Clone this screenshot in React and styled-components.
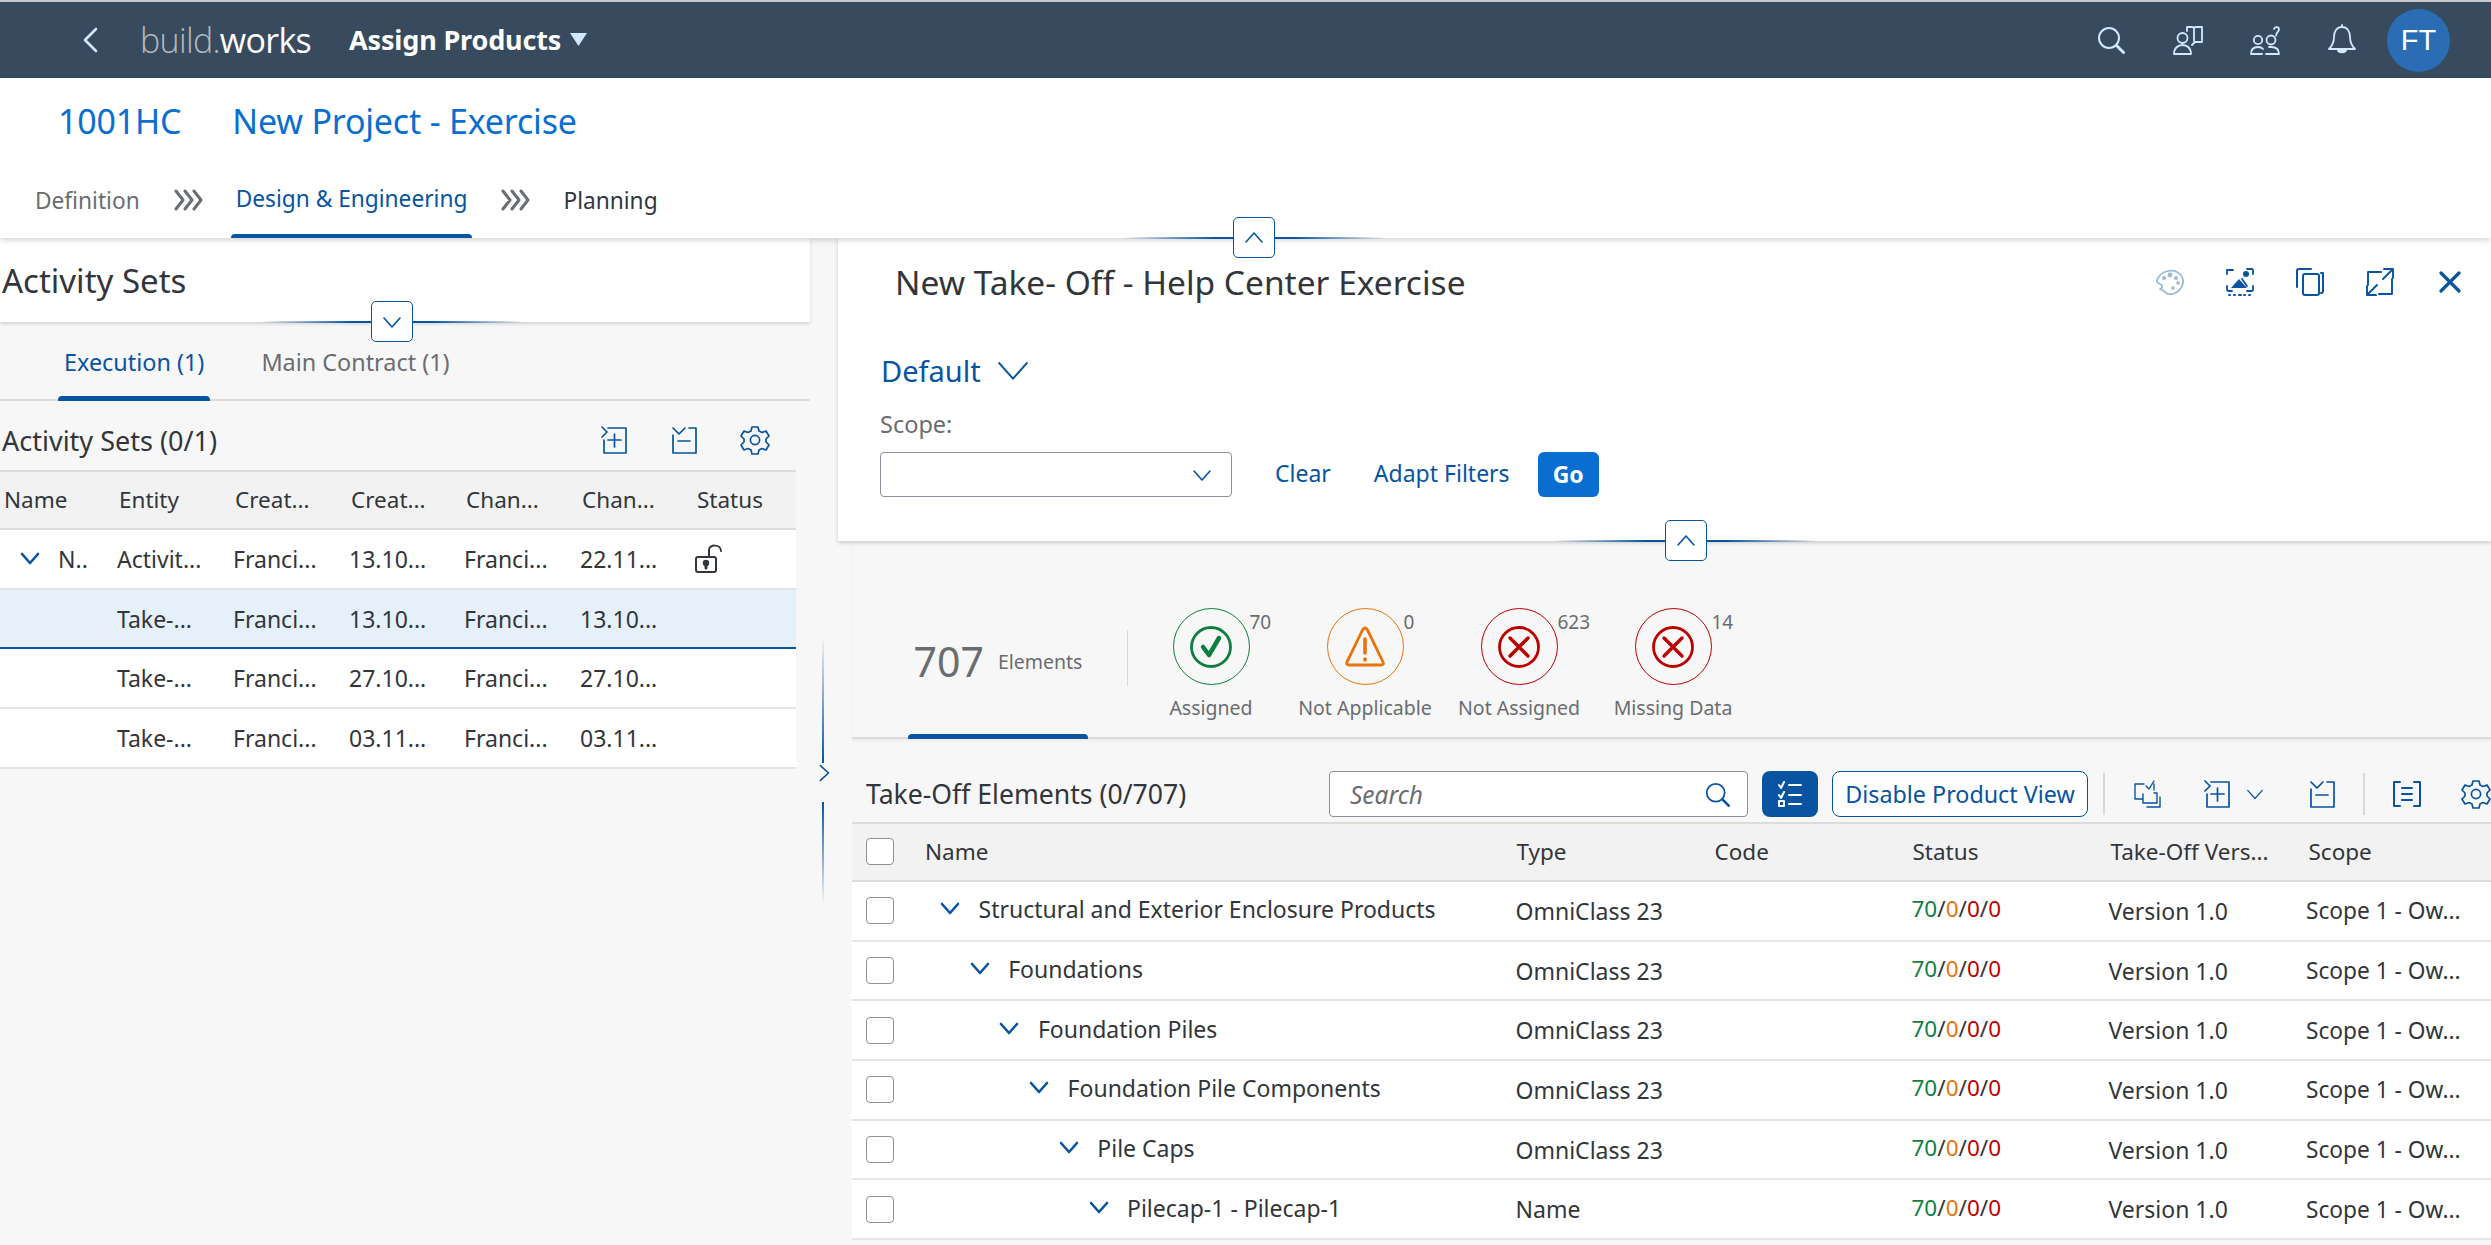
import React from 'react';
import styled, { createGlobalStyle, css } from 'styled-components';

const BLUE = '#0854a0';
const INK = '#32363a';
const GREY = '#6a6d70';
const LINE = '#e5e5e5';
const FONT = '"Noto Sans", "Open Sans", sans-serif';

const Global = createGlobalStyle`
  html, body { margin: 0; padding: 0; background: #f7f7f7; }
  * { box-sizing: border-box; }
  #root { width: 2491px; height: 1245px; overflow: hidden; font-family: ${FONT}; color: ${INK}; }
`;

const activeBar = css`
  position: relative;
  &::after {
    content: '';
    position: absolute;
    left: 0;
    right: 0;
    bottom: 0;
    height: ${p => p.$bar || 5}px;
    background: ${BLUE};
    border-radius: 4px 4px 0 0;
  }
`;

const Page = styled.div`display:flex;flex-direction:column;width:2491px;height:1245px;overflow:hidden;background:#f7f7f7;`;
const Shell = styled.header`height:78px;flex:none;background:#374a5e;border-top:2px solid #c9c9c9;display:flex;align-items:center;color:#fff;padding-right:34px;`;
const BackBtn = styled.div`width:140px;padding-left:82px;display:flex;color:#d1e8ff;`;
const Brand = styled.div`font-family:"Open Sans",sans-serif;font-weight:400;font-size:34px;letter-spacing:-0.7px;width:209px;color:#fff;`;
const BrandDim = styled.span`color:#b5b9bd;font-weight:300;`;
const AppTitle = styled.div`font-weight:700;font-size:27px;letter-spacing:-0.15px;display:flex;align-items:center;gap:9px;padding-bottom:2px;`;
const ShellSpacer = styled.div`flex:1;`;
const ShellIcon = styled.div`width:77px;display:flex;justify-content:center;color:#d1e8ff;`;
const Avatar = styled.div`width:63px;height:63px;margin:0 7px;border-radius:50%;background:#2a6db4;display:flex;align-items:center;justify-content:center;font-family:"Liberation Sans",sans-serif;font-size:29px;color:#fff;`;

const Header = styled.section`height:160px;flex:none;background:#fff;display:flex;flex-direction:column;position:relative;z-index:3;box-shadow:0 2px 6px rgba(0,0,0,.18);`;
const Crumbs = styled.div`display:flex;padding:20px 0 0 58px;height:92px;gap:51px;font-size:34px;color:#0a6ed1;letter-spacing:-0.2px;`;
const Steps = styled.nav`display:flex;align-items:stretch;height:68px;padding-left:35px;font-size:22.7px;`;
const Step = styled.div`display:flex;align-items:center;height:100%;padding-bottom:8px;color:${p => p.$tone};${p => p.$active && css`
  margin: 0 -5px;
  padding: 0 5px 12px;
  ${activeBar}
`}`;
const StepArrow = styled.div`display:flex;align-items:center;padding-bottom:8px;margin:0 33px;color:#6a6d70;`;

const Body = styled.main`flex:1;display:flex;min-height:0;`;
const Left = styled.section`width:810px;flex:none;display:flex;flex-direction:column;`;
const LeftHead = styled.div`height:84px;flex:none;background:#fff;position:relative;padding:22px 0 0 2px;font-size:33px;line-height:42px;box-shadow:0 2px 3px rgba(0,0,0,.15);z-index:1;`;
const Tabs = styled.div`height:79px;flex:none;display:flex;border-bottom:2px solid #dcdcdc;padding-left:58px;gap:45px;font-size:23.4px;`;
const Tab = styled.div`display:flex;align-items:center;padding:0 6px;height:79px;color:${p => p.$active ? BLUE : GREY};${p => p.$active && activeBar}`;
const TableBar = styled.div`height:69px;flex:none;display:flex;align-items:center;width:796px;padding:9px 26px 0 2px;font-size:27px;`;
const BarTitle = styled.div`flex:1;`;
const BarIcons = styled.div`display:flex;gap:42px;align-items:center;color:${BLUE};`;

const Grid = styled.div`display:grid;grid-template-columns:${p => p.$cols};width:${p => p.$width}px;margin-left:${p => p.$offset || 0}px;`;
const HeadCell = styled.div`height:60px;background:#f2f2f2;border-top:2px solid #dcdcdc;border-bottom:2px solid #dcdcdc;display:flex;align-items:center;padding:0 0 2px ${p => p.$pad || 4}px;font-size:22.5px;color:${INK};white-space:nowrap;overflow:hidden;`;
const Cell = styled.div`height:59.7px;background:${p => p.$selected ? '#e5f0fa' : '#fff'};border-bottom:${p => p.$selected ? `2px solid ${BLUE}` : `2px solid ${LINE}`};display:flex;align-items:center;padding:0 0 ${p => p.$lift || 0}px ${p => p.$pad || 2}px;font-size:${p => p.$size || 23}px;color:${INK};white-space:nowrap;overflow:hidden;`;
const TreeChevron = styled.span`display:inline-flex;color:${BLUE};margin-left:${p => p.$left}px;margin-right:${p => p.$right}px;`;

const Splitter = styled.div`width:28px;flex:none;display:flex;flex-direction:column;align-items:center;padding:398px 2px 0 0;color:${BLUE};`;
const SplitLine = styled.div`width:2px;height:${p => p.$h}px;background:linear-gradient(${p => p.$dir}, rgba(8,84,160,0), ${BLUE});`;
const SplitArrow = styled.div`height:39px;display:flex;align-items:flex-start;justify-content:center;margin-left:2px;`;

const Right = styled.section`flex:1;min-width:0;display:flex;flex-direction:column;`;
const FilterPanel = styled.div`height:303px;flex:none;background:#fff;position:relative;box-shadow:0 2px 4px rgba(0,0,0,.18);display:flex;flex-direction:column;z-index:2;`;
const PanelTop = styled.div`height:88px;flex:none;display:flex;align-items:center;padding:0 6px 0 57px;font-size:33.5px;`;
const PanelTitle = styled.div`flex:1;`;
const PanelIcons = styled.div`display:flex;align-items:center;color:${BLUE};`;
const PanelIcon = styled.div`width:70px;display:flex;justify-content:center;opacity:${p => p.$dim ? .4 : 1};`;
const Variant = styled.div`display:flex;align-items:center;gap:13px;padding-left:43px;height:72px;margin-top:8px;font-size:29px;color:${BLUE};`;
const ScopeLabel = styled.div`padding-left:42px;height:26px;line-height:26px;font-size:23.5px;color:${GREY};margin-top:5px;`;
const FilterRow = styled.div`display:flex;align-items:center;padding-left:42px;margin-top:15px;font-size:23px;color:${BLUE};`;
const Select = styled.div`width:352px;height:45px;background:#fff;border:1.5px solid #89919a;border-radius:4px;display:flex;align-items:center;justify-content:flex-end;padding-right:18px;color:${BLUE};margin-right:43px;`;
const LinkText = styled.div`margin-right:${p => p.$gap}px;padding-bottom:3px;`;
const GoBtn = styled.div`width:61px;height:45px;background:#0a6ed1;color:#fff;font-weight:700;border-radius:6px;display:flex;align-items:center;justify-content:center;padding-bottom:2px;`;

const Handle = styled.div`position:absolute;left:${p => p.$x}px;top:${p => p.$y}px;width:264px;height:2px;background:linear-gradient(90deg, rgba(8,84,160,0), ${BLUE} 35%, ${BLUE} 65%, rgba(8,84,160,0));z-index:5;`;
const HandleBtn = styled.div`position:absolute;left:111px;top:-20px;width:42px;height:41px;border:1.5px solid ${BLUE};border-radius:5px;background:#fff;color:${BLUE};display:flex;align-items:center;justify-content:center;`;

const KpiStrip = styled.div`height:198px;flex:none;margin-left:14px;border-bottom:2px solid #dcdcdc;box-shadow:0 2px 3px rgba(0,0,0,.05);display:flex;`;
const KpiTotal = styled.div`width:180px;margin-left:56px;height:198px;display:flex;align-items:center;justify-content:center;gap:14px;padding:47px 0 5px;color:${GREY};${activeBar}`;
const KpiNumber = styled.div`font-size:41px;line-height:44px;`;
const KpiWord = styled.div`font-size:19.5px;`;
const KpiDivider = styled.div`width:1px;height:56px;background:#d9d9d9;margin:89px 6px 0 39px;`;
const KpiItem = styled.div`width:154px;display:flex;flex-direction:column;align-items:center;padding-top:67px;`;
const KpiRing = styled.div`width:77px;height:77px;border-radius:50%;border:1.5px solid ${p => p.$tone};color:${p => p.$tone};position:relative;display:flex;align-items:center;justify-content:center;`;
const KpiCount = styled.div`position:absolute;left:76px;top:1px;font-size:19px;line-height:24px;color:${GREY};`;
const KpiLabel = styled.div`margin-top:10px;font-size:19.5px;line-height:26px;color:${GREY};white-space:nowrap;`;

const Toolbar = styled.div`height:83px;flex:none;display:flex;align-items:center;padding:27px 0 0 28px;color:${BLUE};white-space:nowrap;`;
const ToolTitle = styled.div`width:463px;font-size:26.6px;color:${INK};`;
const SearchBox = styled.div`width:419px;height:46px;flex:none;background:#fff;border:1.5px solid #89919a;border-radius:4px;display:flex;align-items:center;justify-content:space-between;padding:0 17px 0 20px;font-size:24.5px;font-style:italic;color:${GREY};`;
const SearchGlass = styled.span`color:${BLUE};display:flex;`;
const ToggleBtn = styled.div`width:56px;height:46px;flex:none;margin-left:14px;background:${BLUE};color:#fff;border-radius:8px;display:flex;align-items:center;justify-content:center;`;
const OutlineBtn = styled.div`width:256px;height:46px;flex:none;margin-left:14px;background:#fff;border:1.5px solid ${BLUE};border-radius:8px;display:flex;align-items:center;justify-content:center;font-size:23.3px;color:${BLUE};`;
const ToolSep = styled.div`width:2px;height:42px;flex:none;background:#d9d9d9;margin-left:${p => p.$l}px;`;
const ToolIcon = styled.div`display:flex;flex:none;margin-left:${p => p.$l}px;`;

const Check = styled.div`width:28px;height:27px;background:#fff;border:1.5px solid #89919a;border-radius:4px;margin-left:14px;`;
const Tone = styled.span`color:${p => p.$c};`;

const Svg = ({ w = 28, h = 28, box, children, stroke = 2 }) => (
  <svg width={w} height={h} viewBox={box || `0 0 ${w} ${h}`} fill="none" stroke="currentColor" strokeWidth={stroke} strokeLinecap="round" strokeLinejoin="round">{children}</svg>
);

const Chevron = ({ dir = 'down', size = 22, stroke = 1.6 }) => {
  const d = { down: 'M3 7l8 9 8-9', up: 'M3 15l8-9 8 9', right: 'M7 3l9 8-9 8', left: 'M15 3l-9 8 9 8' }[dir];
  return <Svg w={size} h={size} box="0 0 22 22" stroke={stroke}><path d={d} /></Svg>;
};
const BackChevron = () => <Svg w={16} h={26} stroke={2.6}><path d="M14 2L3 13l11 11" /></Svg>;
const TreeArrow = () => <Svg w={20} h={14} box="0 0 20 14" stroke={2.6}><path d="M2 2l8 9 8-9" /></Svg>;
const TripleArrow = () => (
  <Svg w={30} h={22} stroke={3}><path d="M3 2l7 9-7 9M12 2l7 9-7 9M21 2l7 9-7 9" /></Svg>
);
const Caret = () => <svg width="17" height="13" viewBox="0 0 17 13"><path d="M0 0h17L8.500 13z" fill="#d1e8ff" /></svg>;

const SearchIcon = ({ size = 28 }) => (
  <Svg w={size} h={size} box="0 0 28 28" stroke={2}><circle cx="12" cy="12" r="10" /><path d="M19.500 19.500l7 7" strokeWidth="3" /></Svg>
);
const HelpBook = () => (
  <Svg w={30} h={30} stroke={1.8}>
    <circle cx="9.500" cy="13" r="5" />
    <path d="M1 29c0-6 4-9 8.500-9s8.500 3 8.500 9z" />
    <path d="M14 6V2h5c1 0 2 1 2 1s1-1 2-1h6v15h-7l-3 3M21 3v13" />
  </Svg>
);
const PeopleAsk = () => (
  <Svg w={30} h={30} stroke={1.8}>
    <circle cx="8" cy="15" r="4.200" /><circle cx="21" cy="15" r="4.500" />
    <path d="M1 29c0-5 3-7 7-7 2.500 0 4 .7 5 2M1 29h11M16 29h13c0-5-3-7-8-7h-2" />
    <path d="M24 4c1-2.500 5-2.500 5 .5 0 2-3 3-3 6" />
  </Svg>
);
const BellIcon = () => (
  <Svg w={28} h={32} stroke={1.8}>
    <path d="M14 3c-5 0-8 4-8 10 0 6-2 9-5 12h26c-3-3-5-6-5-12 0-6-3-10-8-10zM14 3V1" />
    <path d="M10 26c0 3 8 3 8 0z" fill="currentColor" />
  </Svg>
);
const AddDoc = () => (
  <Svg w={28} h={28} stroke={1.7}>
    <path d="M8 2h18v25H4V14M2 1l5 5-5 5M8 14h13M14.500 8v13" />
  </Svg>
);
const RemoveDoc = () => (
  <Svg w={28} h={28} stroke={1.7}>
    <path d="M3 9v18h23V2h-7M3 2l6 6 6-6M8 15h12" />
  </Svg>
);
const GearIcon = ({ size = 30 }) => (
  <Svg w={size} h={size} box="0 0 30 30" stroke={1.7}>
    <path d="M12 2h6l1 4 3 1.500 4-1.500 3 5-3 3v3l3 3-3 5-4-1.500-3 1.500-1 4h-6l-1-4-3-1.500-4 1.500-3-5 3-3v-3l-3-3 3-5 4 1.500 3-1.500z" />
    <circle cx="15" cy="15" r="4.600" />
  </Svg>
);
const Palette = () => (
  <Svg w={30} h={28} stroke={1.8}>
    <path d="M5 21c3-1 3-4 0-5-3-1-4-3-2-6 4-7 13-9 19-6 6 3 8 10 4 16-3 5-9 7-13 6-3-1-4-4-8-5z" />
    <g fill="currentColor" stroke="none"><circle cx="9" cy="10" r="2" /><circle cx="15" cy="7" r="2.400" /><circle cx="21" cy="10" r="2" /><circle cx="23" cy="15" r="1.800" /><circle cx="18" cy="20" r="1.800" /></g>
  </Svg>
);
const PhotoScan = () => (
  <Svg w={30} h={30} stroke={1.8}>
    <path d="M2 7V3h6M22 2h5c1 0 1 1 1 2v3M2 19v3c0 1 1 2 2 2h3M28 19v4c0 1-1 1-2 1h-4" />
    <path d="M6 21l8-9 8 9z" fill="currentColor" stroke="none" />
    <path d="M17 12l5 7" /><circle cx="21" cy="7" r="3" fill="currentColor" stroke="none" />
    <path d="M4 28h1M9 28h1M19 28h1M24 28h1M14 28h2" strokeWidth="2" />
  </Svg>
);
const Duplicate = () => (
  <Svg w={30} h={30} stroke={2}>
    <path d="M2 20V4c0-1 1-2 2-2h12M26 6h2v18c0 1-.5 2-2 2" />
    <rect x="8" y="7" width="16" height="21" rx="2" />
  </Svg>
);
const Expand = () => (
  <Svg w={30} h={30} stroke={1.9}>
    <path d="M3 18V5h13M27 12v15H14M19 2h9v9M28 2L18 12M2 19v9h9M2 28l10-10" />
  </Svg>
);
const CloseIcon = () => <Svg w={22} h={22} stroke={3.2}><path d="M2 2l18 18M20 2L2 20" /></Svg>;
const ListCheck = () => (
  <Svg w={26} h={28} stroke={2}>
    <path d="M2 5l2 3 3-6M2 15l2 3 3-6M12 5h12M12 15h12M12 24h12" />
    <rect x="2" y="21" width="5" height="5" strokeWidth="2" />
  </Svg>
);
const CopyChecked = () => (
  <Svg w={30} h={30} stroke={1.4}>
    <path d="M12 5H3v15h8M22 11V5M14 7l3 3 5-8M11 15v9h14V14h-3M15 28h13V18" />
  </Svg>
);
const Bracket = () => (
  <Svg w={30} h={28} stroke={2}>
    <path d="M8 2H2v24h6M22 2h6v24h-6M10 8h10M10 14h10M10 20h10" />
  </Svg>
);
const Lock = () => (
  <Svg w={30} h={30} stroke={2}>
    <rect x="1" y="13" width="20" height="15" rx="2" />
    <path d="M14 13V6c0-6 12-6 12 1" />
    <circle cx="11" cy="19" r="2.200" fill="currentColor" />
    <path d="M11 20v4" strokeWidth="3" />
  </Svg>
);
const TickRing = () => (
  <Svg w={44} h={44} stroke={2.8}><circle cx="22" cy="22" r="19.500" /><path d="M14 22l6 8 10-17" strokeWidth="4.500" /></Svg>
);
const WarnRing = () => (
  <Svg w={44} h={44} stroke={2.8}><path d="M22 3c1.500 0 2 1 3 3l15 31c1 2 0 3-2 3H6c-2 0-3-1-2-3L19 6c1-2 1.500-3 3-3z" /><path d="M22 14v14M22 34v1" strokeWidth="3.600" /></Svg>
);
const CrossRing = () => (
  <Svg w={44} h={44} stroke={2.8}><circle cx="22" cy="22" r="19.500" /><path d="M13 13l18 18M31 13L13 31" strokeWidth="3.400" /></Svg>
);

const KPIS = [
  { label: 'Assigned', count: '70', tone: '#107e3e', icon: <TickRing /> },
  { label: 'Not Applicable', count: '0', tone: '#e9730c', icon: <WarnRing /> },
  { label: 'Not Assigned', count: '623', tone: '#bb0000', icon: <CrossRing /> },
  { label: 'Missing Data', count: '14', tone: '#bb0000', icon: <CrossRing /> },
];

const LEFT_HEAD = ['Name', 'Entity', 'Creat...', 'Creat...', 'Chan...', 'Chan...', 'Status'];
const LEFT_ROWS = [
  { cells: ['Activit...', 'Franci...', '13.10...', 'Franci...', '22.11...'], first: true },
  { cells: ['Take-...', 'Franci...', '13.10...', 'Franci...', '13.10...'], selected: true },
  { cells: ['Take-...', 'Franci...', '27.10...', 'Franci...', '27.10...'] },
  { cells: ['Take-...', 'Franci...', '03.11...', 'Franci...', '03.11...'] },
];
const TREE_HEAD = ['Type', 'Code', 'Status', 'Take-Off Vers...', 'Scope'];
const TREE = [
  ['Structural and Exterior Enclosure Products', 'OmniClass 23'],
  ['Foundations', 'OmniClass 23'],
  ['Foundation Piles', 'OmniClass 23'],
  ['Foundation Pile Components', 'OmniClass 23'],
  ['Pile Caps', 'OmniClass 23'],
  ['Pilecap-1 - Pilecap-1', 'Name'],
];

const StatusText = () => (
  <>
    <Tone $c="#107e3e">70</Tone>/<Tone $c="#e9730c">0</Tone>/<Tone $c="#bb0000">0</Tone>/<Tone $c="#bb0000">0</Tone>
  </>
);

export default function App() {
  return (
    <Page>
      <Global />
      <Shell>
        <BackBtn><BackChevron /></BackBtn>
        <Brand><BrandDim>build.</BrandDim>works</Brand>
        <AppTitle>Assign Products <Caret /></AppTitle>
        <ShellSpacer />
        <ShellIcon><SearchIcon /></ShellIcon>
        <ShellIcon><HelpBook /></ShellIcon>
        <ShellIcon><PeopleAsk /></ShellIcon>
        <ShellIcon><BellIcon /></ShellIcon>
        <Avatar>FT</Avatar>
      </Shell>
      <Header>
        <Crumbs><span>1001HC</span><span>New Project - Exercise</span></Crumbs>
        <Steps>
          <Step $tone={GREY}>Definition</Step>
          <StepArrow><TripleArrow /></StepArrow>
          <Step $tone={BLUE} $active $bar={4}>Design &amp; Engineering</Step>
          <StepArrow><TripleArrow /></StepArrow>
          <Step $tone={INK}>Planning</Step>
        </Steps>
        <Handle $x={1122} $y={159}><HandleBtn><Chevron dir="up" /></HandleBtn></Handle>
      </Header>
      <Body>
        <Left>
          <LeftHead>
            Activity Sets
            <Handle $x={260} $y={83}><HandleBtn><Chevron /></HandleBtn></Handle>
          </LeftHead>
          <Tabs>
            <Tab $active>Execution (1)</Tab>
            <Tab>Main Contract (1)</Tab>
          </Tabs>
          <TableBar>
            <BarTitle>Activity Sets (0/1)</BarTitle>
            <BarIcons><AddDoc /><RemoveDoc /><GearIcon /></BarIcons>
          </TableBar>
          <Grid $cols="115px 116px 116px 115px 116px 115px 103px" $width={796}>
            {LEFT_HEAD.map((t, i) => <HeadCell key={i}>{t}</HeadCell>)}
            {LEFT_ROWS.map((r, i) => (
              <React.Fragment key={i}>
                <Cell $selected={r.selected}>
                  {r.first && <><TreeChevron $left={18} $right={18}><TreeArrow /></TreeChevron>N..</>}
                </Cell>
                {r.cells.map((c, j) => <Cell key={j} $selected={r.selected}>{c}</Cell>)}
                <Cell $selected={r.selected}>{r.first && <Lock />}</Cell>
              </React.Fragment>
            ))}
          </Grid>
        </Left>
        <Splitter>
          <SplitLine $h={127} $dir="to bottom" />
          <SplitArrow><Chevron dir="right" size={20} stroke={1.8} /></SplitArrow>
          <SplitLine $h={103} $dir="to top" />
        </Splitter>
        <Right>
          <FilterPanel>
            <PanelTop>
              <PanelTitle>New Take- Off - Help Center Exercise</PanelTitle>
              <PanelIcons>
                <PanelIcon $dim><Palette /></PanelIcon>
                <PanelIcon><PhotoScan /></PanelIcon>
                <PanelIcon><Duplicate /></PanelIcon>
                <PanelIcon><Expand /></PanelIcon>
                <PanelIcon><CloseIcon /></PanelIcon>
              </PanelIcons>
            </PanelTop>
            <Variant>Default <Chevron size={38} stroke={1.2} /></Variant>
            <ScopeLabel>Scope:</ScopeLabel>
            <FilterRow>
              <Select><Chevron /></Select>
              <LinkText $gap={43}>Clear</LinkText>
              <LinkText $gap={28}>Adapt Filters</LinkText>
              <GoBtn>Go</GoBtn>
            </FilterRow>
            <Handle $x={716} $y={302}><HandleBtn><Chevron dir="up" /></HandleBtn></Handle>
          </FilterPanel>
          <KpiStrip>
            <KpiTotal><KpiNumber>707</KpiNumber><KpiWord>Elements</KpiWord></KpiTotal>
            <KpiDivider />
            {KPIS.map(k => (
              <KpiItem key={k.label}>
                <KpiRing $tone={k.tone}>{k.icon}<KpiCount>{k.count}</KpiCount></KpiRing>
                <KpiLabel>{k.label}</KpiLabel>
              </KpiItem>
            ))}
          </KpiStrip>
          <Toolbar>
            <ToolTitle>Take-Off Elements (0/707)</ToolTitle>
            <SearchBox>Search<SearchGlass><SearchIcon size={25} /></SearchGlass></SearchBox>
            <ToggleBtn><ListCheck /></ToggleBtn>
            <OutlineBtn>Disable Product View</OutlineBtn>
            <ToolSep $l={15} />
            <ToolIcon $l={27}><CopyChecked /></ToolIcon>
            <ToolIcon $l={41}><AddDoc /></ToolIcon>
            <ToolIcon $l={14}><Chevron size={20} stroke={1.4} /></ToolIcon>
            <ToolIcon $l={43}><RemoveDoc /></ToolIcon>
            <ToolSep $l={27} />
            <ToolIcon $l={27}><Bracket /></ToolIcon>
            <ToolIcon $l={39}><GearIcon /></ToolIcon>
          </Toolbar>
          <Grid $cols="60px 598.500px 198px 198px 198px 198px 202.500px" $width={1653} $offset={14}>
            <HeadCell $pad={0.001}><Check /></HeadCell>
            <HeadCell $pad={13}>Name</HeadCell>
            {TREE_HEAD.map(t => <HeadCell key={t} $pad={6}>{t}</HeadCell>)}
            {TREE.map(([name, type], i) => (
              <React.Fragment key={name}>
                <Cell $pad={0.001}><Check /></Cell>
                <Cell $lift={3} $pad={0.001}>
                  <TreeChevron $left={28 + i * 29.7} $right={18.5}><TreeArrow /></TreeChevron>{name}
                </Cell>
                <Cell $pad={5}>{type}</Cell>
                <Cell />
                <Cell $lift={4} $pad={5} $size={22.5}><span><StatusText /></span></Cell>
                <Cell $pad={4}>Version 1.0</Cell>
                <Cell $pad={3.5} $size={22.7}>Scope 1 - Ow...</Cell>
              </React.Fragment>
            ))}
          </Grid>
        </Right>
      </Body>
    </Page>
  );
}
